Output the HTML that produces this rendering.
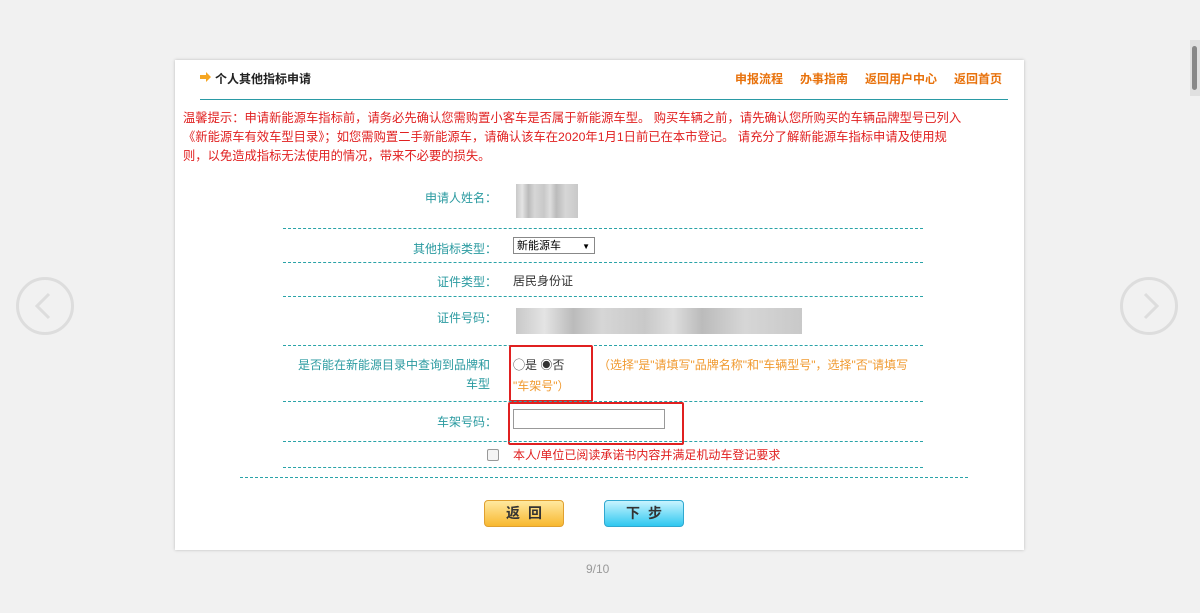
<!DOCTYPE html>
<html><head><meta charset="utf-8"><style>
body{margin:0;width:1200px;height:613px;background:#f1f1f1;position:relative;overflow:hidden;font-family:"Liberation Sans","Noto Sans CJK SC",sans-serif;font-size:12px}
.a{position:absolute;white-space:nowrap}
.panel{position:absolute;left:175px;top:60px;width:849px;height:490px;background:#fff;box-shadow:0 0 3px #bbb}
.dl{position:absolute;left:283px;width:640px;border-top:1px dashed #2aa3a8}
.lb{position:absolute;right:703px;color:#2a9aa0;font-size:12px;white-space:nowrap}
.circ{position:absolute;width:58px;height:58px;border-radius:50%;border:3px solid #ddd;box-sizing:border-box}
.btn{position:absolute;width:78px;height:25px;border-radius:4px;font-size:14px;font-weight:bold;text-align:center;line-height:25px;color:#333;letter-spacing:8px;text-indent:8px}
.blur{position:absolute;background:linear-gradient(90deg,#bbb,#ddd 10%,#aaa 20%,#ccc 30%,#bbb 45%,#d5d5d5 55%,#aaa 65%,#ccc 80%,#bbb);opacity:.8}
</style></head><body>
<div class="circ" style="left:16px;top:277px"><svg width="52" height="52" style="position:absolute;left:0;top:0"><path d="M30 14 L18 26 L30 38" stroke="#ddd" stroke-width="3" fill="none"/></svg></div>
<div class="circ" style="left:1120px;top:277px"><svg width="52" height="52" style="position:absolute;left:0;top:0"><path d="M22 14 L34 26 L22 38" stroke="#ddd" stroke-width="3" fill="none"/></svg></div>
<div style="position:absolute;left:1190px;top:40px;width:10px;height:56px;background:#e0e0e0"><div style="position:absolute;left:2px;top:6px;width:5px;height:44px;background:#888;border-radius:3px"></div></div>
<div class="panel"></div>
<svg class="a" style="left:199px;top:71px" width="13" height="12"><path d="M1 4h6V1l5 5-5 5V8H1z" fill="#f5a623"/></svg>
<div class="a" style="left:215px;top:70px;font-size:12px;color:#222;font-weight:bold">个人其他指标申请</div>
<div class="a" style="left:735px;top:70px;color:#e8720c;font-size:12px;font-weight:bold">申报流程</div>
<div class="a" style="left:800px;top:70px;color:#e8720c;font-size:12px;font-weight:bold">办事指南</div>
<div class="a" style="left:865px;top:70px;color:#e8720c;font-size:12px;font-weight:bold">返回用户中心</div>
<div class="a" style="left:954px;top:70px;color:#e8720c;font-size:12px;font-weight:bold">返回首页</div>
<div style="position:absolute;left:200px;top:99px;width:808px;border-top:1px solid #2a9aa5"></div>
<div class="a" style="left:183px;top:109px;color:#e02020;font-size:12.3px;line-height:19px">温馨提示：申请新能源车指标前，请务必先确认您需购置小客车是否属于新能源车型。 购买车辆之前，请先确认您所购买的车辆品牌型号已列入<br>《新能源车有效车型目录》；如您需购置二手新能源车，请确认该车在2020年1月1日前已在本市登记。 请充分了解新能源车指标申请及使用规<br>则，以免造成指标无法使用的情况，带来不必要的损失。</div>
<div class="lb" style="top:189px">申请人姓名：</div>
<div class="blur" style="left:516px;top:184px;width:62px;height:34px"></div>
<div class="dl" style="top:228px"></div>
<div class="lb" style="top:240px">其他指标类型：</div>
<div style="position:absolute;left:513px;top:237px;width:82px;height:17px;border:1px solid #888;font-size:11px;line-height:17px;box-sizing:border-box;padding-left:3px">新能源车<span style="position:absolute;right:4px;font-size:8px">▼</span></div>
<div class="dl" style="top:262px"></div>
<div class="lb" style="top:273px">证件类型：</div>
<div class="a" style="left:513px;top:272px;color:#333">居民身份证</div>
<div class="dl" style="top:296px"></div>
<div class="lb" style="top:309px">证件号码：</div>
<div class="blur" style="left:516px;top:308px;width:286px;height:26px"></div>
<div class="dl" style="top:345px"></div>
<div class="lb" style="top:356px;right:710px;text-align:right;line-height:19px">是否能在新能源目录中查询到品牌和<br>车型</div>
<div style="position:absolute;left:509px;top:345px;width:80px;height:53px;border:2px solid #e02020;border-radius:2px"></div>
<div class="a" style="left:513px;top:356px;color:#333">◯是 ◉否</div>
<div class="a" style="left:598px;top:356px;color:#f09a30">（选择"是"请填写"品牌名称"和"车辆型号"，选择"否"请填写</div>
<div class="a" style="left:513px;top:377px;color:#f09a30">"车架号"）</div>
<div class="dl" style="top:401px"></div>
<div class="lb" style="top:413px">车架号码：</div>
<div style="position:absolute;left:508px;top:402px;width:172px;height:39px;border:2px solid #e02020;border-radius:2px"></div>
<div style="position:absolute;left:513px;top:409px;width:152px;height:20px;border:1px solid #999;box-sizing:border-box"></div>
<div class="dl" style="top:441px"></div>
<div style="position:absolute;left:487px;top:449px;width:10px;height:10px;border:1px solid #999;border-radius:2px;background:#f4f4f4"></div>
<div class="a" style="left:513px;top:446px;color:#e02020">本人/单位已阅读承诺书内容并满足机动车登记要求</div>
<div class="dl" style="top:467px"></div>
<div style="position:absolute;left:240px;top:477px;width:728px;border-top:1px dashed #2aa3a8"></div>
<div class="btn" style="left:484px;top:500px;background:linear-gradient(#ffe9a0,#f8b830);border:1px solid #e0a030">返回</div>
<div class="btn" style="left:604px;top:500px;background:linear-gradient(#c8f4ff,#30c8f0);border:1px solid #30a8d0">下步</div>
<div class="a" style="left:586px;top:562px;color:#999;font-size:12px">9/10</div>
</body></html>
